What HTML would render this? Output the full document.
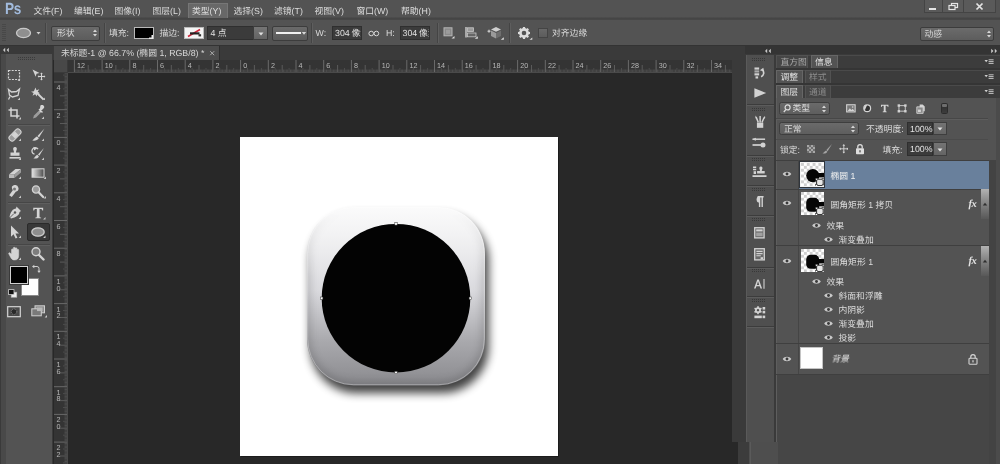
<!DOCTYPE html>
<html lang="zh"><head><meta charset="utf-8"><title>Photoshop</title>
<style>
html,body{margin:0;padding:0;background:#282828;}
body{width:1000px;height:464px;overflow:hidden;font-family:"Liberation Sans","Noto Sans CJK SC",sans-serif;font-size:8.8px;color:#d6d6d6;text-rendering:geometricPrecision;}
#app{position:relative;width:1000px;height:464px;overflow:hidden;background:#282828;}
#app .t,#app svg.i{filter:blur(0.3px);}
#app div,#app svg.i{position:absolute;box-sizing:border-box;}
.t{white-space:nowrap;line-height:11px;height:11px;opacity:.999;}

</style></head>
<body>
<div id="app">
<div style="left:0px;top:0px;width:1000px;height:18px;background:#535353;"></div>
<div style="left:0px;top:17px;width:1000px;height:3px;background:linear-gradient(#4f4f4f,#444 55%,#494949);"></div>
<div class="t" style="left:5.4px;top:0.8px;font-size:16.2px;font-weight:bold;color:#a2bbdd;line-height:17px;height:17px;letter-spacing:-0.3px;transform:scaleX(0.84);transform-origin:0 0">Ps</div>
<div style="left:188px;top:3px;width:40px;height:15px;background:#686868;border:1px solid #767676;border-bottom:none;"></div>
<div class="t" style="left:33.5px;top:6.2px;color:#dedede;">文件(F)</div>
<div class="t" style="left:74px;top:6.2px;color:#dedede;">编辑(E)</div>
<div class="t" style="left:114.5px;top:6.2px;color:#dedede;">图像(I)</div>
<div class="t" style="left:152.5px;top:6.2px;color:#dedede;">图层(L)</div>
<div class="t" style="left:192px;top:6.2px;color:#dedede;">类型(Y)</div>
<div class="t" style="left:233.5px;top:6.2px;color:#dedede;">选择(S)</div>
<div class="t" style="left:274px;top:6.2px;color:#dedede;">滤镜(T)</div>
<div class="t" style="left:314.5px;top:6.2px;color:#dedede;">视图(V)</div>
<div class="t" style="left:356.5px;top:6.2px;color:#dedede;">窗口(W)</div>
<div class="t" style="left:401px;top:6.2px;color:#dedede;">帮助(H)</div>
<div style="left:924px;top:0px;width:19px;height:13px;background:#5a5a5a;border:1px solid #444;border-top:none;"></div>
<div style="left:943px;top:0px;width:21px;height:13px;background:#5a5a5a;border:1px solid #444;border-top:none;border-left:none;"></div>
<div style="left:964px;top:0px;width:32px;height:13px;background:#5a5a5a;border:1px solid #444;border-top:none;border-left:none;"></div>
<svg class="i" style="left:924px;top:0px;" width="72" height="13" viewBox="0 0 72 13"><rect x="5" y="8" width="7" height="2" fill="#e4e4e4"/><rect x="27.5" y="3.5" width="6" height="4" fill="none" stroke="#e4e4e4" stroke-width="1.2"/><rect x="25" y="5.5" width="6" height="4" fill="#5a5a5a" stroke="#e4e4e4" stroke-width="1.2"/><path d="M52.5 3.5l6 6M58.5 3.5l-6 6" stroke="#e4e4e4" stroke-width="1.7" fill="none"/></svg>
<div style="left:0px;top:20px;width:1000px;height:25px;background:#535353;"></div>
<div style="left:0px;top:45px;width:1000px;height:1px;background:#333;"></div>
<div style="left:0px;top:46px;width:1000px;height:14px;background:#3a3a3a;"></div>
<div style="left:0px;top:46px;width:53px;height:418px;background:#3a3a3a;"></div>
<div style="left:0px;top:46px;width:53px;height:8.5px;background:#393939;"></div>
<div style="left:1px;top:54px;width:51px;height:410px;background:#535353;border-left:5px solid #494949;"></div>
<svg class="i" style="left:2px;top:47px;" width="8" height="6" viewBox="0 0 8 6"><path d="M3.2 0.8L1 3l2.2 2.2zM6.8 0.8L4.6 3l2.2 2.2z" fill="#c8c8c8"/></svg>
<div style="left:54px;top:46px;width:165.5px;height:14px;background:#4c4c4c;border-right:1px solid #2e2e2e;"></div>
<div class="t" style="left:61px;top:48.3px;color:#d8d8d8;">未标题-1 @ 66.7% (椭圆 1, RGB/8) *</div>
<svg class="i" style="left:208.6px;top:50.3px;" width="7" height="7" viewBox="0 0 7 7"><path d="M1.2 1.2l4 4M5.2 1.2l-4 4" stroke="#b4b4b4" stroke-width="0.9"/></svg>
<div style="left:54px;top:60px;width:678px;height:13px;background:#343434;border-bottom:1px solid #4a4a4a;"></div>
<div style="left:54px;top:60px;width:14px;height:404px;background:#343434;border-right:1px solid #4a4a4a;"></div>
<div style="left:54px;top:60px;width:14px;height:13px;background:#484848;border-right:1px solid #3a3a3a;border-bottom:1px solid #3a3a3a;"></div>
<svg class="i" style="left:68px;top:60px;" width="664" height="12" viewBox="0 0 664 12"><path d="M6.4 0v12M34.1 0v12M61.8 0v12M89.5 0v12M117.2 0v12M144.9 0v12M172.6 0v12M200.3 0v12M228.0 0v12M255.7 0v12M283.4 0v12M311.1 0v12M338.8 0v12M366.5 0v12M394.2 0v12M421.9 0v12M449.6 0v12M477.3 0v12M505.0 0v12M532.7 0v12M560.4 0v12M588.1 0v12M615.8 0v12M643.5 0v12" stroke="#777" stroke-width="0.8" fill="none"/><path d="M20.2 5v7M47.9 5v7M75.7 5v7M103.3 5v7M131.0 5v7M158.8 5v7M186.4 5v7M214.2 5v7M241.9 5v7M269.6 5v7M297.2 5v7M325.0 5v7M352.6 5v7M380.4 5v7M408.1 5v7M435.8 5v7M463.5 5v7M491.1 5v7M518.9 5v7M546.5 5v7M574.2 5v7M602.0 5v7M629.6 5v7M657.4 5v7" stroke="#6c6c6c" stroke-width="0.7" fill="none"/><path d="M7.8 9.5v2.5M9.2 9.5v2.5M10.6 9.5v2.5M11.9 9.5v2.5M13.3 8v4M14.7 9.5v2.5M16.1 9.5v2.5M17.5 9.5v2.5M18.9 9.5v2.5M21.6 9.5v2.5M23.0 9.5v2.5M24.4 9.5v2.5M25.8 9.5v2.5M27.2 8v4M28.6 9.5v2.5M29.9 9.5v2.5M31.3 9.5v2.5M32.7 9.5v2.5M35.5 9.5v2.5M36.9 9.5v2.5M38.3 9.5v2.5M39.6 9.5v2.5M41.0 8v4M42.4 9.5v2.5M43.8 9.5v2.5M45.2 9.5v2.5M46.6 9.5v2.5M49.3 9.5v2.5M50.7 9.5v2.5M52.1 9.5v2.5M53.5 9.5v2.5M54.9 8v4M56.3 9.5v2.5M57.6 9.5v2.5M59.0 9.5v2.5M60.4 9.5v2.5M63.2 9.5v2.5M64.6 9.5v2.5M66.0 9.5v2.5M67.3 9.5v2.5M68.7 8v4M70.1 9.5v2.5M71.5 9.5v2.5M72.9 9.5v2.5M74.3 9.5v2.5M77.0 9.5v2.5M78.4 9.5v2.5M79.8 9.5v2.5M81.2 9.5v2.5M82.6 8v4M84.0 9.5v2.5M85.3 9.5v2.5M86.7 9.5v2.5M88.1 9.5v2.5M90.9 9.5v2.5M92.3 9.5v2.5M93.7 9.5v2.5M95.0 9.5v2.5M96.4 8v4M97.8 9.5v2.5M99.2 9.5v2.5M100.6 9.5v2.5M102.0 9.5v2.5M104.7 9.5v2.5M106.1 9.5v2.5M107.5 9.5v2.5M108.9 9.5v2.5M110.3 8v4M111.7 9.5v2.5M113.0 9.5v2.5M114.4 9.5v2.5M115.8 9.5v2.5M118.6 9.5v2.5M120.0 9.5v2.5M121.4 9.5v2.5M122.7 9.5v2.5M124.1 8v4M125.5 9.5v2.5M126.9 9.5v2.5M128.3 9.5v2.5M129.7 9.5v2.5M132.4 9.5v2.5M133.8 9.5v2.5M135.2 9.5v2.5M136.6 9.5v2.5M138.0 8v4M139.4 9.5v2.5M140.7 9.5v2.5M142.1 9.5v2.5M143.5 9.5v2.5M146.3 9.5v2.5M147.7 9.5v2.5M149.1 9.5v2.5M150.4 9.5v2.5M151.8 8v4M153.2 9.5v2.5M154.6 9.5v2.5M156.0 9.5v2.5M157.4 9.5v2.5M160.1 9.5v2.5M161.5 9.5v2.5M162.9 9.5v2.5M164.3 9.5v2.5M165.7 8v4M167.1 9.5v2.5M168.4 9.5v2.5M169.8 9.5v2.5M171.2 9.5v2.5M174.0 9.5v2.5M175.4 9.5v2.5M176.8 9.5v2.5M178.1 9.5v2.5M179.5 8v4M180.9 9.5v2.5M182.3 9.5v2.5M183.7 9.5v2.5M185.1 9.5v2.5M187.8 9.5v2.5M189.2 9.5v2.5M190.6 9.5v2.5M192.0 9.5v2.5M193.4 8v4M194.8 9.5v2.5M196.1 9.5v2.5M197.5 9.5v2.5M198.9 9.5v2.5M201.7 9.5v2.5M203.1 9.5v2.5M204.5 9.5v2.5M205.8 9.5v2.5M207.2 8v4M208.6 9.5v2.5M210.0 9.5v2.5M211.4 9.5v2.5M212.8 9.5v2.5M215.5 9.5v2.5M216.9 9.5v2.5M218.3 9.5v2.5M219.7 9.5v2.5M221.1 8v4M222.5 9.5v2.5M223.8 9.5v2.5M225.2 9.5v2.5M226.6 9.5v2.5M229.4 9.5v2.5M230.8 9.5v2.5M232.2 9.5v2.5M233.5 9.5v2.5M234.9 8v4M236.3 9.5v2.5M237.7 9.5v2.5M239.1 9.5v2.5M240.5 9.5v2.5M243.2 9.5v2.5M244.6 9.5v2.5M246.0 9.5v2.5M247.4 9.5v2.5M248.8 8v4M250.2 9.5v2.5M251.5 9.5v2.5M252.9 9.5v2.5M254.3 9.5v2.5M257.1 9.5v2.5M258.5 9.5v2.5M259.9 9.5v2.5M261.2 9.5v2.5M262.6 8v4M264.0 9.5v2.5M265.4 9.5v2.5M266.8 9.5v2.5M268.2 9.5v2.5M270.9 9.5v2.5M272.3 9.5v2.5M273.7 9.5v2.5M275.1 9.5v2.5M276.5 8v4M277.9 9.5v2.5M279.2 9.5v2.5M280.6 9.5v2.5M282.0 9.5v2.5M284.8 9.5v2.5M286.2 9.5v2.5M287.6 9.5v2.5M288.9 9.5v2.5M290.3 8v4M291.7 9.5v2.5M293.1 9.5v2.5M294.5 9.5v2.5M295.9 9.5v2.5M298.6 9.5v2.5M300.0 9.5v2.5M301.4 9.5v2.5M302.8 9.5v2.5M304.2 8v4M305.6 9.5v2.5M306.9 9.5v2.5M308.3 9.5v2.5M309.7 9.5v2.5M312.5 9.5v2.5M313.9 9.5v2.5M315.3 9.5v2.5M316.6 9.5v2.5M318.0 8v4M319.4 9.5v2.5M320.8 9.5v2.5M322.2 9.5v2.5M323.6 9.5v2.5M326.3 9.5v2.5M327.7 9.5v2.5M329.1 9.5v2.5M330.5 9.5v2.5M331.9 8v4M333.3 9.5v2.5M334.6 9.5v2.5M336.0 9.5v2.5M337.4 9.5v2.5M340.2 9.5v2.5M341.6 9.5v2.5M343.0 9.5v2.5M344.3 9.5v2.5M345.7 8v4M347.1 9.5v2.5M348.5 9.5v2.5M349.9 9.5v2.5M351.3 9.5v2.5M354.0 9.5v2.5M355.4 9.5v2.5M356.8 9.5v2.5M358.2 9.5v2.5M359.6 8v4M361.0 9.5v2.5M362.3 9.5v2.5M363.7 9.5v2.5M365.1 9.5v2.5M367.9 9.5v2.5M369.3 9.5v2.5M370.7 9.5v2.5M372.0 9.5v2.5M373.4 8v4M374.8 9.5v2.5M376.2 9.5v2.5M377.6 9.5v2.5M379.0 9.5v2.5M381.7 9.5v2.5M383.1 9.5v2.5M384.5 9.5v2.5M385.9 9.5v2.5M387.3 8v4M388.7 9.5v2.5M390.0 9.5v2.5M391.4 9.5v2.5M392.8 9.5v2.5M395.6 9.5v2.5M397.0 9.5v2.5M398.4 9.5v2.5M399.7 9.5v2.5M401.1 8v4M402.5 9.5v2.5M403.9 9.5v2.5M405.3 9.5v2.5M406.7 9.5v2.5M409.4 9.5v2.5M410.8 9.5v2.5M412.2 9.5v2.5M413.6 9.5v2.5M415.0 8v4M416.4 9.5v2.5M417.7 9.5v2.5M419.1 9.5v2.5M420.5 9.5v2.5M423.3 9.5v2.5M424.7 9.5v2.5M426.1 9.5v2.5M427.4 9.5v2.5M428.8 8v4M430.2 9.5v2.5M431.6 9.5v2.5M433.0 9.5v2.5M434.4 9.5v2.5M437.1 9.5v2.5M438.5 9.5v2.5M439.9 9.5v2.5M441.3 9.5v2.5M442.7 8v4M444.1 9.5v2.5M445.4 9.5v2.5M446.8 9.5v2.5M448.2 9.5v2.5M451.0 9.5v2.5M452.4 9.5v2.5M453.8 9.5v2.5M455.1 9.5v2.5M456.5 8v4M457.9 9.5v2.5M459.3 9.5v2.5M460.7 9.5v2.5M462.1 9.5v2.5M464.8 9.5v2.5M466.2 9.5v2.5M467.6 9.5v2.5M469.0 9.5v2.5M470.4 8v4M471.8 9.5v2.5M473.1 9.5v2.5M474.5 9.5v2.5M475.9 9.5v2.5M478.7 9.5v2.5M480.1 9.5v2.5M481.5 9.5v2.5M482.8 9.5v2.5M484.2 8v4M485.6 9.5v2.5M487.0 9.5v2.5M488.4 9.5v2.5M489.8 9.5v2.5M492.5 9.5v2.5M493.9 9.5v2.5M495.3 9.5v2.5M496.7 9.5v2.5M498.1 8v4M499.5 9.5v2.5M500.8 9.5v2.5M502.2 9.5v2.5M503.6 9.5v2.5M506.4 9.5v2.5M507.8 9.5v2.5M509.2 9.5v2.5M510.5 9.5v2.5M511.9 8v4M513.3 9.5v2.5M514.7 9.5v2.5M516.1 9.5v2.5M517.5 9.5v2.5M520.2 9.5v2.5M521.6 9.5v2.5M523.0 9.5v2.5M524.4 9.5v2.5M525.8 8v4M527.2 9.5v2.5M528.5 9.5v2.5M529.9 9.5v2.5M531.3 9.5v2.5M534.1 9.5v2.5M535.5 9.5v2.5M536.9 9.5v2.5M538.2 9.5v2.5M539.6 8v4M541.0 9.5v2.5M542.4 9.5v2.5M543.8 9.5v2.5M545.2 9.5v2.5M547.9 9.5v2.5M549.3 9.5v2.5M550.7 9.5v2.5M552.1 9.5v2.5M553.5 8v4M554.9 9.5v2.5M556.2 9.5v2.5M557.6 9.5v2.5M559.0 9.5v2.5M561.8 9.5v2.5M563.2 9.5v2.5M564.6 9.5v2.5M565.9 9.5v2.5M567.3 8v4M568.7 9.5v2.5M570.1 9.5v2.5M571.5 9.5v2.5M572.9 9.5v2.5M575.6 9.5v2.5M577.0 9.5v2.5M578.4 9.5v2.5M579.8 9.5v2.5M581.2 8v4M582.6 9.5v2.5M583.9 9.5v2.5M585.3 9.5v2.5M586.7 9.5v2.5M589.5 9.5v2.5M590.9 9.5v2.5M592.3 9.5v2.5M593.6 9.5v2.5M595.0 8v4M596.4 9.5v2.5M597.8 9.5v2.5M599.2 9.5v2.5M600.6 9.5v2.5M603.3 9.5v2.5M604.7 9.5v2.5M606.1 9.5v2.5M607.5 9.5v2.5M608.9 8v4M610.3 9.5v2.5M611.6 9.5v2.5M613.0 9.5v2.5M614.4 9.5v2.5M617.2 9.5v2.5M618.6 9.5v2.5M620.0 9.5v2.5M621.3 9.5v2.5M622.7 8v4M624.1 9.5v2.5M625.5 9.5v2.5M626.9 9.5v2.5M628.3 9.5v2.5M631.0 9.5v2.5M632.4 9.5v2.5M633.8 9.5v2.5M635.2 9.5v2.5M636.6 8v4M638.0 9.5v2.5M639.3 9.5v2.5M640.7 9.5v2.5M642.1 9.5v2.5M644.9 9.5v2.5M646.3 9.5v2.5M647.7 9.5v2.5M649.0 9.5v2.5M650.4 8v4M651.8 9.5v2.5M653.2 9.5v2.5M654.6 9.5v2.5M656.0 9.5v2.5M658.7 9.5v2.5M660.1 9.5v2.5M661.5 9.5v2.5M662.9 9.5v2.5" stroke="#5c5c5c" stroke-width="0.6" fill="none"/></svg>
<div class="t" style="left:77px;top:59.7px;color:#b6b6b6;font-size:7.2px;">12</div>
<div class="t" style="left:104.7px;top:59.7px;color:#b6b6b6;font-size:7.2px;">10</div>
<div class="t" style="left:132.4px;top:59.7px;color:#b6b6b6;font-size:7.2px;">8</div>
<div class="t" style="left:160.1px;top:59.7px;color:#b6b6b6;font-size:7.2px;">6</div>
<div class="t" style="left:187.8px;top:59.7px;color:#b6b6b6;font-size:7.2px;">4</div>
<div class="t" style="left:215.5px;top:59.7px;color:#b6b6b6;font-size:7.2px;">2</div>
<div class="t" style="left:243.2px;top:59.7px;color:#b6b6b6;font-size:7.2px;">0</div>
<div class="t" style="left:270.9px;top:59.7px;color:#b6b6b6;font-size:7.2px;">2</div>
<div class="t" style="left:298.6px;top:59.7px;color:#b6b6b6;font-size:7.2px;">4</div>
<div class="t" style="left:326.3px;top:59.7px;color:#b6b6b6;font-size:7.2px;">6</div>
<div class="t" style="left:354px;top:59.7px;color:#b6b6b6;font-size:7.2px;">8</div>
<div class="t" style="left:381.7px;top:59.7px;color:#b6b6b6;font-size:7.2px;">10</div>
<div class="t" style="left:409.4px;top:59.7px;color:#b6b6b6;font-size:7.2px;">12</div>
<div class="t" style="left:437.1px;top:59.7px;color:#b6b6b6;font-size:7.2px;">14</div>
<div class="t" style="left:464.8px;top:59.7px;color:#b6b6b6;font-size:7.2px;">16</div>
<div class="t" style="left:492.5px;top:59.7px;color:#b6b6b6;font-size:7.2px;">18</div>
<div class="t" style="left:520.2px;top:59.7px;color:#b6b6b6;font-size:7.2px;">20</div>
<div class="t" style="left:547.9px;top:59.7px;color:#b6b6b6;font-size:7.2px;">22</div>
<div class="t" style="left:575.6px;top:59.7px;color:#b6b6b6;font-size:7.2px;">24</div>
<div class="t" style="left:603.3px;top:59.7px;color:#b6b6b6;font-size:7.2px;">26</div>
<div class="t" style="left:631px;top:59.7px;color:#b6b6b6;font-size:7.2px;">28</div>
<div class="t" style="left:658.7px;top:59.7px;color:#b6b6b6;font-size:7.2px;">30</div>
<div class="t" style="left:686.4px;top:59.7px;color:#b6b6b6;font-size:7.2px;">32</div>
<div class="t" style="left:714.1px;top:59.7px;color:#b6b6b6;font-size:7.2px;">34</div>
<svg class="i" style="left:54px;top:73px;" width="13" height="391" viewBox="0 0 13 391"><path d="M0 9.0h13M0 36.7h13M0 64.4h13M0 92.1h13M0 119.8h13M0 147.5h13M0 175.2h13M0 202.9h13M0 230.6h13M0 258.3h13M0 286.0h13M0 313.7h13M0 341.4h13M0 369.1h13M0 396.8h13" stroke="#777" stroke-width="0.8" fill="none"/><path d="M6 22.8h7M6 50.5h7M6 78.2h7M6 105.9h7M6 133.7h7M6 161.3h7M6 189.1h7M6 216.8h7M6 244.5h7M6 272.2h7M6 299.9h7M6 327.6h7M6 355.2h7M6 383.0h7M6 410.6h7" stroke="#6c6c6c" stroke-width="0.7" fill="none"/><path d="M10.5 0.7h2.5M9 2.1h4M10.5 3.5h2.5M10.5 4.8h2.5M10.5 6.2h2.5M10.5 7.6h2.5M10.5 10.4h2.5M10.5 11.8h2.5M10.5 13.2h2.5M10.5 14.5h2.5M9 15.9h4M10.5 17.3h2.5M10.5 18.7h2.5M10.5 20.1h2.5M10.5 21.5h2.5M10.5 24.2h2.5M10.5 25.6h2.5M10.5 27.0h2.5M10.5 28.4h2.5M9 29.8h4M10.5 31.2h2.5M10.5 32.5h2.5M10.5 33.9h2.5M10.5 35.3h2.5M10.5 38.1h2.5M10.5 39.5h2.5M10.5 40.9h2.5M10.5 42.2h2.5M9 43.6h4M10.5 45.0h2.5M10.5 46.4h2.5M10.5 47.8h2.5M10.5 49.2h2.5M10.5 51.9h2.5M10.5 53.3h2.5M10.5 54.7h2.5M10.5 56.1h2.5M9 57.5h4M10.5 58.9h2.5M10.5 60.2h2.5M10.5 61.6h2.5M10.5 63.0h2.5M10.5 65.8h2.5M10.5 67.2h2.5M10.5 68.6h2.5M10.5 69.9h2.5M9 71.3h4M10.5 72.7h2.5M10.5 74.1h2.5M10.5 75.5h2.5M10.5 76.9h2.5M10.5 79.6h2.5M10.5 81.0h2.5M10.5 82.4h2.5M10.5 83.8h2.5M9 85.2h4M10.5 86.6h2.5M10.5 87.9h2.5M10.5 89.3h2.5M10.5 90.7h2.5M10.5 93.5h2.5M10.5 94.9h2.5M10.5 96.3h2.5M10.5 97.6h2.5M9 99.0h4M10.5 100.4h2.5M10.5 101.8h2.5M10.5 103.2h2.5M10.5 104.6h2.5M10.5 107.3h2.5M10.5 108.7h2.5M10.5 110.1h2.5M10.5 111.5h2.5M9 112.9h4M10.5 114.3h2.5M10.5 115.6h2.5M10.5 117.0h2.5M10.5 118.4h2.5M10.5 121.2h2.5M10.5 122.6h2.5M10.5 124.0h2.5M10.5 125.3h2.5M9 126.7h4M10.5 128.1h2.5M10.5 129.5h2.5M10.5 130.9h2.5M10.5 132.3h2.5M10.5 135.0h2.5M10.5 136.4h2.5M10.5 137.8h2.5M10.5 139.2h2.5M9 140.6h4M10.5 142.0h2.5M10.5 143.3h2.5M10.5 144.7h2.5M10.5 146.1h2.5M10.5 148.9h2.5M10.5 150.3h2.5M10.5 151.7h2.5M10.5 153.0h2.5M9 154.4h4M10.5 155.8h2.5M10.5 157.2h2.5M10.5 158.6h2.5M10.5 160.0h2.5M10.5 162.7h2.5M10.5 164.1h2.5M10.5 165.5h2.5M10.5 166.9h2.5M9 168.3h4M10.5 169.7h2.5M10.5 171.0h2.5M10.5 172.4h2.5M10.5 173.8h2.5M10.5 176.6h2.5M10.5 178.0h2.5M10.5 179.4h2.5M10.5 180.7h2.5M9 182.1h4M10.5 183.5h2.5M10.5 184.9h2.5M10.5 186.3h2.5M10.5 187.7h2.5M10.5 190.4h2.5M10.5 191.8h2.5M10.5 193.2h2.5M10.5 194.6h2.5M9 196.0h4M10.5 197.4h2.5M10.5 198.7h2.5M10.5 200.1h2.5M10.5 201.5h2.5M10.5 204.3h2.5M10.5 205.7h2.5M10.5 207.1h2.5M10.5 208.4h2.5M9 209.8h4M10.5 211.2h2.5M10.5 212.6h2.5M10.5 214.0h2.5M10.5 215.4h2.5M10.5 218.1h2.5M10.5 219.5h2.5M10.5 220.9h2.5M10.5 222.3h2.5M9 223.7h4M10.5 225.1h2.5M10.5 226.4h2.5M10.5 227.8h2.5M10.5 229.2h2.5M10.5 232.0h2.5M10.5 233.4h2.5M10.5 234.8h2.5M10.5 236.1h2.5M9 237.5h4M10.5 238.9h2.5M10.5 240.3h2.5M10.5 241.7h2.5M10.5 243.1h2.5M10.5 245.8h2.5M10.5 247.2h2.5M10.5 248.6h2.5M10.5 250.0h2.5M9 251.4h4M10.5 252.8h2.5M10.5 254.1h2.5M10.5 255.5h2.5M10.5 256.9h2.5M10.5 259.7h2.5M10.5 261.1h2.5M10.5 262.5h2.5M10.5 263.8h2.5M9 265.2h4M10.5 266.6h2.5M10.5 268.0h2.5M10.5 269.4h2.5M10.5 270.8h2.5M10.5 273.5h2.5M10.5 274.9h2.5M10.5 276.3h2.5M10.5 277.7h2.5M9 279.1h4M10.5 280.5h2.5M10.5 281.8h2.5M10.5 283.2h2.5M10.5 284.6h2.5M10.5 287.4h2.5M10.5 288.8h2.5M10.5 290.2h2.5M10.5 291.5h2.5M9 292.9h4M10.5 294.3h2.5M10.5 295.7h2.5M10.5 297.1h2.5M10.5 298.5h2.5M10.5 301.2h2.5M10.5 302.6h2.5M10.5 304.0h2.5M10.5 305.4h2.5M9 306.8h4M10.5 308.2h2.5M10.5 309.5h2.5M10.5 310.9h2.5M10.5 312.3h2.5M10.5 315.1h2.5M10.5 316.5h2.5M10.5 317.9h2.5M10.5 319.2h2.5M9 320.6h4M10.5 322.0h2.5M10.5 323.4h2.5M10.5 324.8h2.5M10.5 326.2h2.5M10.5 328.9h2.5M10.5 330.3h2.5M10.5 331.7h2.5M10.5 333.1h2.5M9 334.5h4M10.5 335.9h2.5M10.5 337.2h2.5M10.5 338.6h2.5M10.5 340.0h2.5M10.5 342.8h2.5M10.5 344.2h2.5M10.5 345.6h2.5M10.5 346.9h2.5M9 348.3h4M10.5 349.7h2.5M10.5 351.1h2.5M10.5 352.5h2.5M10.5 353.9h2.5M10.5 356.6h2.5M10.5 358.0h2.5M10.5 359.4h2.5M10.5 360.8h2.5M9 362.2h4M10.5 363.6h2.5M10.5 364.9h2.5M10.5 366.3h2.5M10.5 367.7h2.5M10.5 370.5h2.5M10.5 371.9h2.5M10.5 373.3h2.5M10.5 374.6h2.5M9 376.0h4M10.5 377.4h2.5M10.5 378.8h2.5M10.5 380.2h2.5M10.5 381.6h2.5M10.5 384.3h2.5M10.5 385.7h2.5M10.5 387.1h2.5M10.5 388.5h2.5M9 389.9h4M10.5 391.3h2.5M10.5 392.6h2.5M10.5 394.0h2.5M10.5 395.4h2.5M10.5 398.2h2.5M10.5 399.6h2.5M10.5 401.0h2.5M10.5 402.3h2.5M9 403.7h4M10.5 405.1h2.5M10.5 406.5h2.5M10.5 407.9h2.5M10.5 409.3h2.5M10.5 412.0h2.5M10.5 413.4h2.5M10.5 414.8h2.5M10.5 416.2h2.5M9 417.6h4M10.5 419.0h2.5M10.5 420.3h2.5M10.5 421.7h2.5M10.5 423.1h2.5" stroke="#5c5c5c" stroke-width="0.6" fill="none"/></svg>
<div class="t" style="left:56.5px;top:84px;color:#b6b6b6;font-size:7.2px;line-height:8px;height:8px;">4</div>
<div class="t" style="left:56.5px;top:111.7px;color:#b6b6b6;font-size:7.2px;line-height:8px;height:8px;">2</div>
<div class="t" style="left:56.5px;top:139.4px;color:#b6b6b6;font-size:7.2px;line-height:8px;height:8px;">0</div>
<div class="t" style="left:56.5px;top:167.1px;color:#b6b6b6;font-size:7.2px;line-height:8px;height:8px;">2</div>
<div class="t" style="left:56.5px;top:194.8px;color:#b6b6b6;font-size:7.2px;line-height:8px;height:8px;">4</div>
<div class="t" style="left:56.5px;top:222.5px;color:#b6b6b6;font-size:7.2px;line-height:8px;height:8px;">6</div>
<div class="t" style="left:56.5px;top:250.2px;color:#b6b6b6;font-size:7.2px;line-height:8px;height:8px;">8</div>
<div class="t" style="left:56.5px;top:277.9px;color:#b6b6b6;font-size:7.2px;line-height:8px;height:8px;">1</div>
<div class="t" style="left:56.5px;top:284.5px;color:#b6b6b6;font-size:7.2px;line-height:8px;height:8px;">0</div>
<div class="t" style="left:56.5px;top:305.6px;color:#b6b6b6;font-size:7.2px;line-height:8px;height:8px;">1</div>
<div class="t" style="left:56.5px;top:312.2px;color:#b6b6b6;font-size:7.2px;line-height:8px;height:8px;">2</div>
<div class="t" style="left:56.5px;top:333.3px;color:#b6b6b6;font-size:7.2px;line-height:8px;height:8px;">1</div>
<div class="t" style="left:56.5px;top:339.9px;color:#b6b6b6;font-size:7.2px;line-height:8px;height:8px;">4</div>
<div class="t" style="left:56.5px;top:361px;color:#b6b6b6;font-size:7.2px;line-height:8px;height:8px;">1</div>
<div class="t" style="left:56.5px;top:367.6px;color:#b6b6b6;font-size:7.2px;line-height:8px;height:8px;">6</div>
<div class="t" style="left:56.5px;top:388.7px;color:#b6b6b6;font-size:7.2px;line-height:8px;height:8px;">1</div>
<div class="t" style="left:56.5px;top:395.3px;color:#b6b6b6;font-size:7.2px;line-height:8px;height:8px;">8</div>
<div class="t" style="left:56.5px;top:416.4px;color:#b6b6b6;font-size:7.2px;line-height:8px;height:8px;">2</div>
<div class="t" style="left:56.5px;top:423px;color:#b6b6b6;font-size:7.2px;line-height:8px;height:8px;">0</div>
<div class="t" style="left:56.5px;top:444.1px;color:#b6b6b6;font-size:7.2px;line-height:8px;height:8px;">2</div>
<div class="t" style="left:56.5px;top:450.7px;color:#b6b6b6;font-size:7.2px;line-height:8px;height:8px;">2</div>
<div class="t" style="left:56.5px;top:471.8px;color:#b6b6b6;font-size:7.2px;line-height:8px;height:8px;">2</div>
<div class="t" style="left:56.5px;top:478.4px;color:#b6b6b6;font-size:7.2px;line-height:8px;height:8px;">4</div>
<div style="left:732px;top:60px;width:13px;height:404px;background:#3a3a3a;"></div>
<div style="left:240px;top:137px;width:318px;height:318.5px;background:#fff;box-shadow:1px 1px 0 #1c1c1c;"></div>
<svg class="i" style="left:240px;top:137px;" width="318" height="318" viewBox="0 0 318 318"><defs><linearGradient id="rg" x1="0" y1="0" x2="0" y2="1"><stop offset="0" stop-color="#fbfbfb"/><stop offset="0.14" stop-color="#f3f3f4"/><stop offset="0.26" stop-color="#ebebed"/><stop offset="0.47" stop-color="#dadade"/><stop offset="0.75" stop-color="#a9a9ad"/><stop offset="1" stop-color="#8a8a8e"/></linearGradient><filter id="ds" x="-30%" y="-30%" width="170%" height="170%"><feGaussianBlur stdDeviation="5"/></filter><filter id="is" x="-10%" y="-10%" width="120%" height="120%"><feGaussianBlur stdDeviation="3.5"/></filter><clipPath id="rc"><rect x="67" y="70" width="178" height="178.4" rx="46.5"/></clipPath><linearGradient id="mg" x1="0" y1="0" x2="0" y2="1"><stop offset="0.08" stop-color="#000"/><stop offset="0.4" stop-color="#fff"/></linearGradient><mask id="mk"><rect x="60" y="60" width="200" height="200" fill="url(#mg)"/></mask></defs><rect x="70.5" y="78" width="178" height="178" rx="46" fill="#000" opacity="0.75" filter="url(#ds)"/><rect x="67" y="70" width="178" height="178.4" rx="46.5" fill="url(#rg)"/><g clip-path="url(#rc)"><g mask="url(#mk)"><rect x="67" y="70" width="178" height="178.4" rx="46.5" fill="none" stroke="#000" stroke-opacity="0.13" stroke-width="9" filter="url(#is)"/></g><rect x="67.7" y="70.7" width="176.6" height="177" rx="45.8" fill="none" stroke="#fff" stroke-opacity="0.3" stroke-width="1"/></g><circle cx="156" cy="161.2" r="74.3" fill="#030303"/><g fill="#fff" stroke="#333" stroke-width="0.5"><rect x="154.8" y="85.7" width="2.4" height="2.4"/><rect x="154.8" y="234.3" width="2.4" height="2.4"/><rect x="80.5" y="160" width="2.4" height="2.4"/><rect x="229.1" y="160" width="2.4" height="2.4"/></g></svg>
<svg class="i" style="left:2px;top:23px;" width="4" height="20" viewBox="0 0 4 20"><path d="M1 1v18M3 1v18" stroke="#3e3e3e" stroke-width="1" stroke-dasharray="1 1"/></svg>
<svg class="i" style="left:14px;top:26px;" width="30" height="14" viewBox="0 0 30 14"><ellipse cx="9.5" cy="7" rx="7" ry="4.6" fill="#8f8f8f" stroke="#c9c9c9" stroke-width="1.3"/><path d="M22.5 6h4l-2 2.4z" fill="#d0d0d0"/></svg>
<div style="left:45px;top:23px;width:1px;height:20px;background:#444;box-shadow:1px 0 0 #5e5e5e;"></div>
<div style="left:51px;top:26px;width:49px;height:14.5px;background:linear-gradient(#6a6a6a,#5c5c5c);border:1px solid #3c3c3c;border-radius:2px;"></div>
<div class="t" style="left:57px;top:28px;color:#dadada;">形状</div>
<svg class="i" style="left:91px;top:27px;" width="8" height="12" viewBox="0 0 8 12"><path d="M2 5l2 -2.4l2 2.4zM2 7l2 2.4l2 -2.4z" fill="#d8d8d8"/></svg>
<div style="left:104px;top:23px;width:1px;height:20px;background:#444;box-shadow:1px 0 0 #5e5e5e;"></div>
<div class="t" style="left:109px;top:28px;color:#dadada;">填充:</div>
<div style="left:134px;top:27px;width:19.5px;height:12px;background:#000;border:1px solid #b8b8b8;"></div>
<svg class="i" style="left:149px;top:34.5px;" width="4" height="4" viewBox="0 0 4 4"><path d="M0 4h4v-4h-1.5v2.5h-2.5z" fill="#e8e8e8"/></svg>
<div class="t" style="left:159.5px;top:28px;color:#dadada;">描边:</div>
<div style="left:183.5px;top:27px;width:20px;height:12px;background:#f4f4f4;border:1px solid #bbb;"></div>
<svg class="i" style="left:184.5px;top:28px;" width="18" height="10" viewBox="0 0 18 10"><path d="M3 8.5L15 1.5" stroke="#d0243a" stroke-width="1.5"/><rect x="5" y="4.3" width="9.5" height="2.2" fill="#222"/><rect x="13.5" y="6.2" width="2.6" height="2.2" fill="#333"/></svg>
<div style="left:207px;top:25.5px;width:46px;height:14.5px;background:#3b3b3b;border:1px solid #2f2f2f;border-right:none;"></div>
<div class="t" style="left:210.5px;top:28px;color:#e2e2e2;">4 点</div>
<div style="left:253px;top:25.5px;width:14.5px;height:14.5px;background:linear-gradient(#757575,#646464);border:1px solid #3c3c3c;"></div>
<svg class="i" style="left:256.5px;top:30.5px;" width="8" height="6" viewBox="0 0 8 6"><path d="M1.5 1.5h5l-2.5 3z" fill="#e0e0e0"/></svg>
<div style="left:272px;top:26px;width:35.5px;height:14.5px;background:linear-gradient(#6a6a6a,#5a5a5a);border:1px solid #3c3c3c;border-radius:2px;"></div>
<div style="left:276px;top:32.3px;width:25px;height:1.8px;background:#f0f0f0;"></div>
<svg class="i" style="left:300.5px;top:31px;" width="6" height="5" viewBox="0 0 6 5"><path d="M0.8 1h4.4l-2.2 2.8z" fill="#d8d8d8"/></svg>
<div style="left:311px;top:23px;width:1px;height:20px;background:#444;box-shadow:1px 0 0 #5e5e5e;"></div>
<div class="t" style="left:315.5px;top:28px;color:#dadada;">W:</div>
<div style="left:332px;top:25.5px;width:29.5px;height:14.5px;background:#3b3b3b;border:1px solid #2f2f2f;overflow:hidden;"><div class="t" style="left:2px;top:1.5px;color:#e2e2e2">304<span style="margin-left:-0.6px"> </span>像素</div></div>
<svg class="i" style="left:367.5px;top:29.5px;" width="12" height="7" viewBox="0 0 12 7"><circle cx="3.2" cy="3.5" r="2.3" fill="none" stroke="#d8d8d8" stroke-width="1"/><circle cx="8.4" cy="3.5" r="2.3" fill="none" stroke="#d8d8d8" stroke-width="1"/></svg>
<div class="t" style="left:386px;top:28px;color:#dadada;">H:</div>
<div style="left:399.5px;top:25.5px;width:30px;height:14.5px;background:#3b3b3b;border:1px solid #2f2f2f;overflow:hidden;"><div class="t" style="left:2px;top:1.5px;color:#e2e2e2">304<span style="margin-left:-0.6px"> </span>像素</div></div>
<div style="left:436.5px;top:23px;width:1px;height:20px;background:#444;box-shadow:1px 0 0 #5e5e5e;"></div>
<svg class="i" style="left:443px;top:27px;" width="12" height="12" viewBox="0 0 12 12"><rect x="1" y="0.8" width="8" height="8" fill="#8a8a8a" stroke="#b5b5b5" stroke-width="1"/><rect x="3" y="2.8" width="4" height="4" fill="#9c9c9c"/><path d="M8.5 11.5h3v-2.5z" fill="#ddd"/></svg>
<svg class="i" style="left:465px;top:27px;" width="13" height="12" viewBox="0 0 13 12"><path d="M1 0v10.5" stroke="#d8d8d8" stroke-width="1.3"/><rect x="2.5" y="0.8" width="6" height="3.6" fill="#9a9a9a" stroke="#c8c8c8" stroke-width="0.8"/><rect x="2.5" y="6" width="8.5" height="3.8" fill="#666" stroke="#c8c8c8" stroke-width="0.8"/><path d="M9.8 11.8h3v-2.5z" fill="#ddd"/></svg>
<svg class="i" style="left:486.5px;top:26px;" width="17" height="14" viewBox="0 0 17 14"><path d="M9 1l5 2.4l-5 2.4l-5 -2.4z" fill="#cfcfcf"/><path d="M4 4.6l5 2.4v5.5l-5 -2.4z" fill="#9a9a9a"/><path d="M14 4.6l-5 2.4v5.5l5 -2.4z" fill="#6e6e6e"/><path d="M0.5 5.2h3M2 3.7v3" stroke="#ddd" stroke-width="1"/><path d="M13.8 13.8h3v-2.5z" fill="#ddd"/></svg>
<div style="left:509px;top:23px;width:1px;height:20px;background:#444;box-shadow:1px 0 0 #5e5e5e;"></div>
<svg class="i" style="left:518px;top:27px;" width="15" height="13" viewBox="0 0 15 13"><g transform="translate(6 6)"><circle r="3.6" fill="none" stroke="#dcdcdc" stroke-width="2.6"/><rect x="-1.1" y="-6" width="2.2" height="2.6" fill="#dcdcdc" transform="rotate(0)"/><rect x="-1.1" y="-6" width="2.2" height="2.6" fill="#dcdcdc" transform="rotate(45)"/><rect x="-1.1" y="-6" width="2.2" height="2.6" fill="#dcdcdc" transform="rotate(90)"/><rect x="-1.1" y="-6" width="2.2" height="2.6" fill="#dcdcdc" transform="rotate(135)"/><rect x="-1.1" y="-6" width="2.2" height="2.6" fill="#dcdcdc" transform="rotate(180)"/><rect x="-1.1" y="-6" width="2.2" height="2.6" fill="#dcdcdc" transform="rotate(225)"/><rect x="-1.1" y="-6" width="2.2" height="2.6" fill="#dcdcdc" transform="rotate(270)"/><rect x="-1.1" y="-6" width="2.2" height="2.6" fill="#dcdcdc" transform="rotate(315)"/></g><path d="M11.5 12.8h2.8v-2.3z" fill="#ddd"/></svg>
<div style="left:538px;top:28px;width:9.5px;height:9.5px;background:linear-gradient(#686868,#5c5c5c);border:1px solid #444;"></div>
<div class="t" style="left:552px;top:28px;color:#dadada;">对齐边缘</div>
<div style="left:920px;top:26.5px;width:74px;height:14.5px;background:linear-gradient(#6b6b6b,#5d5d5d);border:1px solid #3c3c3c;border-radius:2px;"></div>
<div class="t" style="left:924.5px;top:28.5px;color:#dadada;">动感</div>
<svg class="i" style="left:984.5px;top:27.5px;" width="8" height="12" viewBox="0 0 8 12"><path d="M2 5l2 -2.4l2 2.4zM2 7l2 2.4l2 -2.4z" fill="#d8d8d8"/></svg>
<svg class="i" style="left:18px;top:56.5px;" width="18" height="3" viewBox="0 0 18 3"><path d="M0 0.5h17M0 2.5h17" stroke="#3b3b3b" stroke-width="1" stroke-dasharray="1 1"/></svg>
<div style="left:26.5px;top:223px;width:23px;height:18px;background:#383838;border:1px solid #2a2a2a;border-radius:2px;"></div>
<div style="left:8px;top:124px;width:42px;height:1px;background:#464646;box-shadow:0 1px 0 #5e5e5e;"></div>
<div style="left:8px;top:202px;width:42px;height:1px;background:#464646;box-shadow:0 1px 0 #5e5e5e;"></div>
<div style="left:8px;top:243.5px;width:42px;height:1px;background:#464646;box-shadow:0 1px 0 #5e5e5e;"></div>
<svg class="i" style="left:5.6px;top:67px;" width="16" height="16" viewBox="0 0 16 16"><rect x="2.5" y="3.5" width="11" height="9" fill="none" stroke="#d4d4d4" stroke-width="1.2" stroke-dasharray="2 1.2"/><path d="M11.6 14h2.4v-2.4z" fill="#c8c8c8"/></svg>
<svg class="i" style="left:29.7px;top:67px;" width="16" height="16" viewBox="0 0 16 16"><path d="M2.5 2.5l7 3.4l-3 0.8l-0.8 3z" fill="#d4d4d4"/><path d="M11.5 6.5v6M8.5 9.5h6" stroke="#d4d4d4" stroke-width="1.1"/><path d="M11.5 5.6l1.3 1.5h-2.6zM11.5 13.4l1.3 -1.5h-2.6zM7.6 9.5l1.5 -1.3v2.6zM15.4 9.5l-1.5 -1.3v2.6z" fill="#d4d4d4"/></svg>
<svg class="i" style="left:5.6px;top:86px;" width="16" height="16" viewBox="0 0 16 16"><path d="M2.5 3.5l3 2.5l5 -0.5l3 -2.5l-1.5 6.5l-5.5 1.5l-3 -2z" fill="none" stroke="#d4d4d4" stroke-width="1.3"/><path d="M4 10.5l-1.5 3" stroke="#d4d4d4" stroke-width="1.2"/><path d="M11.6 14h2.4v-2.4z" fill="#c8c8c8"/></svg>
<svg class="i" style="left:29.7px;top:86px;" width="16" height="16" viewBox="0 0 16 16"><path d="M7 7l6.5 6.5" stroke="#d4d4d4" stroke-width="1.8"/><path d="M5.5 1.5l1 2.8l2.8 -1l-1.6 2.4l2.3 1.6l-2.9 0.3l-0.2 2.9l-1.8 -2.3l-2.5 1.5l1 -2.8l-2.6 -1.2l2.9 -0.5z" fill="#d4d4d4"/><path d="M12.6 14h2.4v-2.4z" fill="#c8c8c8"/></svg>
<svg class="i" style="left:5.6px;top:105px;" width="16" height="16" viewBox="0 0 16 16"><path d="M5 2.5v8.5h8.5M2.5 5h8.5v8.5" fill="none" stroke="#d4d4d4" stroke-width="1.5"/><path d="M12.6 14.5h2.4v-2.4z" fill="#c8c8c8"/></svg>
<svg class="i" style="left:29.7px;top:105px;" width="16" height="16" viewBox="0 0 16 16"><path d="M3 13.5l1 -3l5.5 -5.5l2 2l-5.5 5.5z" fill="#9c9c9c"/><path d="M9 4l3.5 3.5M10.5 5.5l2.5 -2.5a1.4 1.4 0 0 0 -2 -2z" stroke="#d4d4d4" stroke-width="1.4" fill="#d4d4d4"/><path d="M11.6 14h2.4v-2.4z" fill="#c8c8c8"/></svg>
<svg class="i" style="left:6.6px;top:126.5px;" width="16" height="16" viewBox="0 0 16 16"><g transform="rotate(-45 8 8)"><rect x="1" y="5" width="14" height="6" rx="2.5" fill="#9c9c9c" stroke="#d4d4d4" stroke-width="1"/><rect x="5.5" y="5.5" width="5" height="5" fill="#d4d4d4"/></g><path d="M11.6 14h2.4v-2.4z" fill="#c8c8c8"/></svg>
<svg class="i" style="left:30.3px;top:126.5px;" width="16" height="16" viewBox="0 0 16 16"><path d="M14.5 1.5l-7 7.5l1.5 1.5z" fill="#d4d4d4"/><path d="M7 9.5l1.8 1.8c-1 2.2 -4 2.6 -6.8 2.2c1.8 -0.6 2 -2.6 5 -4z" fill="#d4d4d4"/><path d="M11.6 14h2.4v-2.4z" fill="#c8c8c8"/></svg>
<svg class="i" style="left:6.6px;top:145.5px;" width="16" height="16" viewBox="0 0 16 16"><path d="M6.2 2.2a1.9 1.9 0 0 1 3.6 0c0.3 1.6 -0.8 2.5 -0.8 4.3h3.5v3.2h-9v-3.2h3.5c0 -1.8 -1.1 -2.7 -0.8 -4.3z" fill="#d4d4d4"/><rect x="2.5" y="11" width="11" height="1.6" fill="#d4d4d4"/><path d="M11.6 14h2.4v-2.4z" fill="#c8c8c8"/></svg>
<svg class="i" style="left:30.3px;top:145.5px;" width="16" height="16" viewBox="0 0 16 16"><path d="M14 2l-6 6.5l1.3 1.3z" fill="#d4d4d4"/><path d="M7.3 8.8l1.6 1.6c-0.8 2 -3.2 2.4 -5.5 2c1.5 -0.5 1.6 -2.3 3.9 -3.6z" fill="#d4d4d4"/><path d="M8 3.2a3.3 3.3 0 1 0 -3.5 5" fill="none" stroke="#d4d4d4" stroke-width="1.3"/><path d="M3.5 0.8l3.6 1.8l-3 2z" fill="#d4d4d4"/><path d="M11.6 14h2.4v-2.4z" fill="#c8c8c8"/></svg>
<svg class="i" style="left:6.6px;top:164.5px;" width="16" height="16" viewBox="0 0 16 16"><path d="M2 9.5l6.5 -5.5h5.5l-6.5 5.5z" fill="#d4d4d4"/><path d="M2 9.5h5.5v3.5h-5.5z" fill="#bbb"/><path d="M7.5 9.5l6.5 -5.5v3.5l-6.5 5.5z" fill="#9c9c9c"/><path d="M11.6 14h2.4v-2.4z" fill="#c8c8c8"/></svg>
<svg class="i" style="left:30.3px;top:164.5px;" width="16" height="16" viewBox="0 0 16 16"><defs><linearGradient id="tg"><stop offset="0" stop-color="#e6e6e6"/><stop offset="1" stop-color="#4a4a4a"/></linearGradient></defs><rect x="2" y="3.8" width="12" height="8.4" fill="url(#tg)" stroke="#d4d4d4" stroke-width="1"/><path d="M13.6 14h2.4v-2.4z" fill="#c8c8c8"/></svg>
<svg class="i" style="left:6.6px;top:183.5px;" width="16" height="16" viewBox="0 0 16 16"><path d="M5 2.5a3.6 3.6 0 0 1 6.4 1.2c0.6 2 -0.6 3.6 -2.6 4l-4 5.3l-2.6 -1.8l3.6 -5c-0.8 -1.2 -1.2 -2.3 -0.8 -3.7z" fill="#d4d4d4"/><circle cx="7.5" cy="5" r="1.5" fill="#777"/><path d="M11.6 14h2.4v-2.4z" fill="#c8c8c8"/></svg>
<svg class="i" style="left:30.3px;top:183.5px;" width="16" height="16" viewBox="0 0 16 16"><circle cx="6" cy="5.5" r="3.6" fill="#9c9c9c" stroke="#d4d4d4" stroke-width="1.3"/><path d="M8.6 8.2l4.6 4.8" stroke="#d4d4d4" stroke-width="2.2" stroke-linecap="round"/><path d="M13.6 14.5h2.4v-2.4z" fill="#c8c8c8"/></svg>
<svg class="i" style="left:6.6px;top:205px;" width="16" height="16" viewBox="0 0 16 16"><path d="M9.5 1.5l4.5 4.5l-1.5 1c0 3 -3.5 5.5 -8.5 6.5l-1.5 -1.5c1 -5 3.5 -8.5 6.5 -8.5z" fill="#d4d4d4"/><circle cx="8" cy="7.5" r="1.2" fill="#555"/><path d="M2.5 13l4.5 -4.5" stroke="#555" stroke-width="0.9"/><path d="M11.6 14h2.4v-2.4z" fill="#c8c8c8"/></svg>
<svg class="i" style="left:30.3px;top:205px;" width="16" height="16" viewBox="0 0 16 16"><path transform="translate(1 0.6) scale(0.9)" d="M2.5 2.5h11v3h-1c-0.2 -1.3 -0.8 -1.7 -2 -1.7h-1v8.2c0 0.9 0.4 1.2 1.7 1.2v0.8h-6.4v-0.8c1.3 0 1.7 -0.3 1.7 -1.2v-8.2h-1c-1.2 0 -1.8 0.4 -2 1.7h-1z" fill="#d4d4d4"/><path d="M13.1 14.5h2.4v-2.4z" fill="#c8c8c8"/></svg>
<svg class="i" style="left:6.6px;top:224px;" width="16" height="16" viewBox="0 0 16 16"><path d="M4 1.5l8 8h-3.6l2 4.2l-1.8 0.8l-2 -4.2l-2.6 2.4z" fill="#d4d4d4"/><path d="M11.6 14h2.4v-2.4z" fill="#c8c8c8"/></svg>
<svg class="i" style="left:30.3px;top:224px;" width="16" height="16" viewBox="0 0 16 16"><ellipse cx="8" cy="8" rx="6.2" ry="4.2" fill="#8e8e8e" stroke="#cfcfcf" stroke-width="1.3"/><path d="M13.1 14h2.4v-2.4z" fill="#c8c8c8"/></svg>
<svg class="i" style="left:6.6px;top:245.5px;" width="16" height="16" viewBox="0 0 16 16"><path d="M4.5 8v-4.2a0.9 0.9 0 0 1 1.8 0v3v-4.6a0.9 0.9 0 0 1 1.8 0v4.4v-4a0.9 0.9 0 0 1 1.8 0v4.4v-2.8a0.9 0.9 0 0 1 1.8 0v5.3c0 3 -1.5 4.5 -4 4.5c-2.2 0 -3 -0.8 -4 -2.6l-2 -3.6c-0.4 -0.9 0.7 -1.5 1.4 -0.8z" fill="#d4d4d4" stroke="#d4d4d4" stroke-width="0.5"/><path d="M11.6 14h2.4v-2.4z" fill="#c8c8c8"/></svg>
<svg class="i" style="left:30.3px;top:245.5px;" width="16" height="16" viewBox="0 0 16 16"><circle cx="6" cy="5.8" r="4" fill="#7d7d7d" stroke="#d4d4d4" stroke-width="1.4"/><path d="M9 9l4.5 4.5" stroke="#d4d4d4" stroke-width="2.4" stroke-linecap="round"/></svg>
<div style="left:20.7px;top:278.3px;width:18.3px;height:17.7px;background:#fff;border:1px solid #8a8a8a;"></div>
<div style="left:10.2px;top:266.2px;width:17.6px;height:17.4px;background:#000;border:1px solid #d0d0d0;box-shadow:0 0 0 1px #3a3a3a;"></div>
<svg class="i" style="left:31px;top:264px;" width="10" height="10" viewBox="0 0 10 10"><path d="M2.5 2.5h3.5a2 2 0 0 1 2 2v3" fill="none" stroke="#d0d0d0" stroke-width="1"/><path d="M3.3 0.8l-2.3 1.7l2.3 1.7zM6.3 6.7l1.7 2.3l1.7 -2.3z" fill="#d0d0d0"/></svg>
<svg class="i" style="left:7.5px;top:289px;" width="10" height="9" viewBox="0 0 10 9"><rect x="3.2" y="3.2" width="5.6" height="5" fill="#eee" stroke="#bbb" stroke-width="0.6"/><rect x="0.6" y="0.6" width="5.4" height="5" fill="#111" stroke="#ccc" stroke-width="0.8"/></svg>
<svg class="i" style="left:6.5px;top:306px;" width="14" height="11.5" viewBox="0 0 14 11.5"><rect x="0.7" y="0.7" width="12.6" height="10" fill="#4a4a4a" stroke="#d4d4d4" stroke-width="1.2"/><circle cx="7" cy="5.7" r="2.8" fill="#2a2a2a" stroke="#9a9a9a" stroke-width="0.8" stroke-dasharray="1 0.8"/></svg>
<svg class="i" style="left:30.5px;top:305px;" width="16" height="13" viewBox="0 0 16 13"><rect x="4" y="0.8" width="9.5" height="7" fill="#8c8c8c" stroke="#cfcfcf" stroke-width="1"/><rect x="0.8" y="3.8" width="9.5" height="7" fill="#7a7a7a" stroke="#cfcfcf" stroke-width="1"/><rect x="6" y="2.5" width="5.5" height="3.6" fill="#b8b8b8"/><path d="M13.6 12.5h2.4v-2.4z" fill="#c8c8c8"/></svg>
<div style="left:745px;top:46px;width:255px;height:8.5px;background:#343434;"></div>
<div style="left:745px;top:54px;width:255px;height:410px;background:#3a3a3a;"></div>
<svg class="i" style="left:764px;top:47.5px;" width="8" height="6" viewBox="0 0 8 6"><path d="M3.2 0.8L1 3l2.2 2.2zM6.8 0.8L4.6 3l2.2 2.2z" fill="#c8c8c8"/></svg>
<svg class="i" style="left:989.5px;top:47.5px;" width="8" height="6" viewBox="0 0 8 6"><path d="M1.2 0.8L3.4 3L1.2 5.2zM4.8 0.8L7 3L4.8 5.2z" fill="#c8c8c8"/></svg>
<div style="left:746px;top:54.5px;width:28px;height:410px;background:#4f4f4f;border-left:1px solid #5a5a5a;"></div>
<svg class="i" style="left:752px;top:57.5px;" width="15" height="3" viewBox="0 0 15 3"><path d="M0 0.5h14M0 2.5h14" stroke="#383838" stroke-width="1" stroke-dasharray="1 1"/></svg>
<svg class="i" style="left:754.4px;top:66.6px;overflow:visible;" width="12.2" height="11.8" viewBox="0 0 13 12.6"><rect x="0.5" y="0.5" width="5" height="2.3" fill="#d2d2d2"/><rect x="0.5" y="3.6" width="5" height="2.3" fill="#aaa"/><rect x="0.5" y="6.7" width="5" height="2.3" fill="#d2d2d2"/><rect x="1.6" y="10" width="2.8" height="2.3" fill="#d2d2d2"/><path d="M7.6 10.4c3 -1.4 3.8 -5 1.2 -7.6" fill="none" stroke="#d2d2d2" stroke-width="1.7"/><path d="M6.2 3.5l3.8 -2.8l0.6 4z" fill="#d2d2d2"/></svg>
<svg class="i" style="left:754px;top:87.8px;overflow:visible;" width="12.4" height="10" viewBox="0 0 12.4 10"><path d="M0.4 0.2l11.8 4.8l-11.8 4.8z" fill="#d2d2d2"/></svg>
<div style="left:747px;top:104.4px;width:27px;height:1px;background:#3c3c3c;box-shadow:0 1px 0 #5c5c5c;"></div>
<svg class="i" style="left:752px;top:107.5px;" width="15" height="3" viewBox="0 0 15 3"><path d="M0 0.5h14M0 2.5h14" stroke="#383838" stroke-width="1" stroke-dasharray="1 1"/></svg>
<svg class="i" style="left:753.5px;top:115.3px;overflow:visible;" width="11.7" height="13.4" viewBox="0 0 12 13.4"><path d="M3 7.6h6.5v5.4h-6.5z" fill="#d2d2d2"/><path d="M4.4 7.4l-2.2 -5.4M6.3 7.4v-6.6M8.2 7.4l2.2 -5" stroke="#d2d2d2" stroke-width="1.5"/><path d="M1.4 0.4l1.7 2.1l-1.5 0.8zM10.3 1.2l1.5 0.8l-1.7 2.1z" fill="#d2d2d2"/></svg>
<svg class="i" style="left:752.4px;top:137.4px;overflow:visible;" width="13.8" height="10.8" viewBox="0 0 13.8 10.8"><path d="M0.5 2.2h12.6" stroke="#d2d2d2" stroke-width="1.5"/><path d="M0.3 2.2l3.6 -1.5v3z" fill="#d2d2d2"/><path d="M0.5 8h8.6" stroke="#d2d2d2" stroke-width="1.7"/><circle cx="11" cy="8" r="2.5" fill="#d2d2d2"/></svg>
<div style="left:747px;top:155.2px;width:27px;height:1px;background:#3c3c3c;box-shadow:0 1px 0 #5c5c5c;"></div>
<svg class="i" style="left:752px;top:157.7px;" width="15" height="3" viewBox="0 0 15 3"><path d="M0 0.5h14M0 2.5h14" stroke="#383838" stroke-width="1" stroke-dasharray="1 1"/></svg>
<svg class="i" style="left:752px;top:166px;overflow:visible;" width="15" height="11.8" viewBox="0 0 15 11.8"><path d="M1 0.4h3.2v1.5h-3.2zM1 2.8h3.2v1.5h-3.2z" fill="#d2d2d2"/><path d="M7.4 1.6a1.6 1.6 0 0 1 3 0c0.3 1.3 -0.6 2 -0.6 3.3h2.9v2.6h-7.6v-2.6h2.9c0 -1.3 -0.9 -2 -0.6 -3.3z" fill="#d2d2d2"/><rect x="0.5" y="9.2" width="14" height="1.8" fill="#d2d2d2"/><rect x="1.6" y="5.2" width="2.4" height="2.8" fill="#d2d2d2"/></svg>
<div style="left:747px;top:185px;width:27px;height:1px;background:#3c3c3c;box-shadow:0 1px 0 #5c5c5c;"></div>
<svg class="i" style="left:752px;top:187.9px;" width="15" height="3" viewBox="0 0 15 3"><path d="M0 0.5h14M0 2.5h14" stroke="#383838" stroke-width="1" stroke-dasharray="1 1"/></svg>
<svg class="i" style="left:754px;top:196.4px;overflow:visible;" width="10" height="11.4" viewBox="0 0 10 11.4"><path d="M3.6 0.7h6M5.6 0.7v10.4M8.2 0.7v10.4" stroke="#d2d2d2" stroke-width="1.4" fill="none"/><path d="M5.8 0.2a3.2 3.2 0 0 0 0 6.4z" fill="#d2d2d2"/></svg>
<div style="left:747px;top:214.7px;width:27px;height:1px;background:#3c3c3c;box-shadow:0 1px 0 #5c5c5c;"></div>
<svg class="i" style="left:752px;top:217.5px;" width="15" height="3" viewBox="0 0 15 3"><path d="M0 0.5h14M0 2.5h14" stroke="#383838" stroke-width="1" stroke-dasharray="1 1"/></svg>
<svg class="i" style="left:753.6px;top:227px;overflow:visible;" width="10.8" height="11.6" viewBox="0 0 10.8 11.6"><rect x="0.7" y="0.7" width="9.4" height="10.2" fill="#6a6a6a" stroke="#d2d2d2" stroke-width="1.3"/><rect x="2.2" y="2.4" width="6.4" height="2" fill="#d2d2d2"/><rect x="2.2" y="5.6" width="6.4" height="3.6" fill="#a0a0a0"/></svg>
<svg class="i" style="left:753.8px;top:248px;overflow:visible;" width="11" height="12.6" viewBox="0 0 11 12.6"><rect x="0.7" y="0.7" width="9.6" height="11.2" fill="#6a6a6a" stroke="#d2d2d2" stroke-width="1.3"/><path d="M2.4 3.4h6.2M2.4 5.6h6.2M2.4 7.8h4.4" stroke="#d2d2d2" stroke-width="1.1"/><path d="M6.6 9.2h2.4v2h-2.4z" fill="#d2d2d2"/></svg>
<div style="left:747px;top:266.5px;width:27px;height:1px;background:#3c3c3c;box-shadow:0 1px 0 #5c5c5c;"></div>
<svg class="i" style="left:752px;top:268.9px;" width="15" height="3" viewBox="0 0 15 3"><path d="M0 0.5h14M0 2.5h14" stroke="#383838" stroke-width="1" stroke-dasharray="1 1"/></svg>
<svg class="i" style="left:754.4px;top:279px;overflow:visible;" width="10.8" height="9.8" viewBox="0 0 10.8 9.8"><path d="M0 9.6l3.3 -9.2h1.5l3.3 9.2h-1.6l-0.8 -2.4h-3.3l-0.8 2.4zM2.9 5.9h2.3l-1.15 -3.6z" fill="#d2d2d2"/><path d="M10 0v9.8" stroke="#d2d2d2" stroke-width="1.1"/></svg>
<div style="left:747px;top:295.5px;width:27px;height:1px;background:#3c3c3c;box-shadow:0 1px 0 #5c5c5c;"></div>
<svg class="i" style="left:752px;top:298.5px;" width="15" height="3" viewBox="0 0 15 3"><path d="M0 0.5h14M0 2.5h14" stroke="#383838" stroke-width="1" stroke-dasharray="1 1"/></svg>
<svg class="i" style="left:754.4px;top:306.4px;overflow:visible;" width="11.6" height="13" viewBox="0 0 11.6 13"><g transform="translate(4 4.2)"><circle r="2.1" fill="none" stroke="#d2d2d2" stroke-width="1.8"/><rect x="-0.8" y="-4" width="1.6" height="1.8" fill="#d2d2d2" transform="rotate(0)"/><rect x="-0.8" y="-4" width="1.6" height="1.8" fill="#d2d2d2" transform="rotate(60)"/><rect x="-0.8" y="-4" width="1.6" height="1.8" fill="#d2d2d2" transform="rotate(120)"/><rect x="-0.8" y="-4" width="1.6" height="1.8" fill="#d2d2d2" transform="rotate(180)"/><rect x="-0.8" y="-4" width="1.6" height="1.8" fill="#d2d2d2" transform="rotate(240)"/><rect x="-0.8" y="-4" width="1.6" height="1.8" fill="#d2d2d2" transform="rotate(300)"/></g><rect x="8.6" y="1" width="2.6" height="2.6" fill="#d2d2d2"/><rect x="8.6" y="4.8" width="2.6" height="2.6" fill="#d2d2d2"/><rect x="0.4" y="9.6" width="7.4" height="2.6" fill="#d2d2d2"/><rect x="8.6" y="9.6" width="2.6" height="2.6" fill="#d2d2d2"/></svg>
<div style="left:747px;top:326px;width:27px;height:1px;background:#3c3c3c;box-shadow:0 1px 0 #5c5c5c;"></div>
<div style="left:776px;top:55.3px;width:224px;height:13px;background:#3c3c3c;border-top:1px solid #4a4a4a;"></div>
<div style="left:776px;top:55.3px;width:32px;height:13px;background:#464646;border:1px solid #525252;border-bottom:none;"></div>
<div class="t" style="left:780.5px;top:56.8px;color:#aaaaaa;">直方图</div>
<div style="left:810.5px;top:55.3px;width:27px;height:13px;background:#535353;border:1px solid #666;border-bottom:none;"></div>
<div class="t" style="left:815px;top:56.8px;color:#e2e2e2;">信息</div>
<svg class="i" style="left:983.5px;top:59.3px;" width="10" height="6" viewBox="0 0 10 6"><path d="M0.5 1h3.4l-1.7 2.2z" fill="#d0d0d0"/><path d="M4.6 0.8h5M4.6 2.6h5M4.6 4.4h5" stroke="#d0d0d0" stroke-width="0.9"/></svg>
<div style="left:776px;top:68px;width:224px;height:2px;background:#353535;"></div>
<div style="left:776px;top:70px;width:224px;height:13px;background:#3c3c3c;border-top:1px solid #4a4a4a;"></div>
<div style="left:776px;top:70px;width:26.5px;height:13px;background:#535353;border:1px solid #666;border-bottom:none;"></div>
<div class="t" style="left:780.5px;top:71.5px;color:#e2e2e2;">调整</div>
<div style="left:804.5px;top:70px;width:26.5px;height:13px;background:#464646;border:1px solid #525252;border-bottom:none;"></div>
<div class="t" style="left:809px;top:71.5px;color:#8c8c8c;">样式</div>
<svg class="i" style="left:983.5px;top:74px;" width="10" height="6" viewBox="0 0 10 6"><path d="M0.5 1h3.4l-1.7 2.2z" fill="#d0d0d0"/><path d="M4.6 0.8h5M4.6 2.6h5M4.6 4.4h5" stroke="#d0d0d0" stroke-width="0.9"/></svg>
<div style="left:776px;top:83px;width:224px;height:2px;background:#353535;"></div>
<div style="left:776px;top:85.4px;width:224px;height:13px;background:#3c3c3c;border-top:1px solid #4a4a4a;"></div>
<div style="left:776px;top:85.4px;width:26.5px;height:13px;background:#535353;border:1px solid #666;border-bottom:none;"></div>
<div class="t" style="left:780.5px;top:86.9px;color:#e2e2e2;">图层</div>
<div style="left:804.5px;top:85.4px;width:26.5px;height:13px;background:#464646;border:1px solid #525252;border-bottom:none;"></div>
<div class="t" style="left:809px;top:86.9px;color:#8c8c8c;">通道</div>
<svg class="i" style="left:983.5px;top:89.4px;" width="10" height="6" viewBox="0 0 10 6"><path d="M0.5 1h3.4l-1.7 2.2z" fill="#d0d0d0"/><path d="M4.6 0.8h5M4.6 2.6h5M4.6 4.4h5" stroke="#d0d0d0" stroke-width="0.9"/></svg>
<div style="left:776px;top:98px;width:224px;height:366px;background:#535353;"></div>
<div style="left:776px;top:98px;width:1px;height:366px;background:#5e5e5e;"></div>
<div style="left:779px;top:101.5px;width:50.5px;height:13.5px;background:linear-gradient(#6a6a6a,#5e5e5e);border:1px solid #3e3e3e;border-radius:2.5px;"></div>
<svg class="i" style="left:782.5px;top:104px;" width="9" height="9" viewBox="0 0 9 9"><circle cx="4.6" cy="3.4" r="2.5" fill="none" stroke="#dcdcdc" stroke-width="1.2"/><path d="M3 5.4l-2.2 2.6" stroke="#dcdcdc" stroke-width="1.3"/></svg>
<div class="t" style="left:792.5px;top:103px;color:#dcdcdc;">类型</div>
<svg class="i" style="left:820px;top:102.5px;" width="8" height="12" viewBox="0 0 8 12"><path d="M2 5l2 -2.4l2 2.4zM2 7l2 2.4l2 -2.4z" fill="#d8d8d8"/></svg>
<svg class="i" style="left:845.8px;top:103.6px;overflow:visible;" width="9.8" height="8.7" viewBox="0 0 12 10.4"><rect x="0.8" y="0.8" width="10.4" height="8.8" fill="#777" stroke="#d4d4d4" stroke-width="1.3"/><path d="M2 8.4l2.7 -3.2l1.9 1.9l1.7 -1.5l2 2.8z" fill="#d4d4d4"/><circle cx="8.2" cy="3.5" r="1" fill="#d4d4d4"/></svg>
<svg class="i" style="left:863px;top:103.8px;overflow:visible;" width="8.4" height="8.4" viewBox="0 0 10.6 10.6"><circle cx="5.3" cy="5.3" r="4.3" fill="#333" stroke="#d4d4d4" stroke-width="1.5"/><path d="M5.3 1a4.3 4.3 0 0 0 -3.04 7.34z" fill="#d4d4d4"/></svg>
<svg class="i" style="left:880.2px;top:104px;overflow:visible;" width="9.4" height="8.4" viewBox="0 0 11 10.6"><path d="M0.8 1h9.4v2.8h-0.9c-0.2 -1.2 -0.6 -1.5 -1.6 -1.5h-1v6.3c0 0.7 0.3 1 1.3 1v0.9h-5v-0.9c1 0 1.3 -0.3 1.3 -1v-6.3h-1c-1 0 -1.4 0.3 -1.6 1.5h-0.9z" fill="#d4d4d4"/></svg>
<svg class="i" style="left:897.4px;top:103.9px;overflow:visible;" width="10.2" height="8.8" viewBox="0 0 11.6 10.6"><rect x="2" y="2" width="7.6" height="6.6" fill="none" stroke="#d4d4d4" stroke-width="1.1"/><g fill="#d4d4d4"><rect x="0.4" y="0.4" width="2.9" height="2.9"/><rect x="8.3" y="0.4" width="2.9" height="2.9"/><rect x="0.4" y="7.3" width="2.9" height="2.9"/><rect x="8.3" y="7.3" width="2.9" height="2.9"/></g></svg>
<svg class="i" style="left:916px;top:103.5px;overflow:visible;" width="9.4" height="10" viewBox="0 0 11.4 12.6"><path d="M0.8 3.6h8v8.2h-8z" fill="#8a8a8a" stroke="#d4d4d4" stroke-width="1.1"/><path d="M4.4 0.6h3.8l2.6 2.6v6h-2v-5.2h-4.4z" fill="#d4d4d4"/><rect x="2.3" y="7" width="3.6" height="3.2" fill="#d4d4d4"/></svg>
<div style="left:941.3px;top:102.5px;width:6.8px;height:11px;background:linear-gradient(#2e2e2e,#3c3c3c);border-radius:1.5px;border:1px solid #2c2c2c;"></div>
<div style="left:942.4px;top:103.5px;width:4.6px;height:3.2px;background:#6e6e6e;border-radius:1px;"></div>
<div style="left:776px;top:117.5px;width:212px;height:1px;background:#474747;box-shadow:0 1px 0 #5d5d5d;"></div>
<div style="left:779px;top:121.5px;width:79.5px;height:13.5px;background:linear-gradient(#6a6a6a,#5e5e5e);border:1px solid #3e3e3e;border-radius:2.5px;"></div>
<div class="t" style="left:784px;top:123.7px;color:#dcdcdc;">正常</div>
<svg class="i" style="left:849px;top:122.5px;" width="8" height="12" viewBox="0 0 8 12"><path d="M2 5l2 -2.4l2 2.4zM2 7l2 2.4l2 -2.4z" fill="#d8d8d8"/></svg>
<div class="t" style="left:866px;top:123.7px;color:#dcdcdc;">不透明度:</div>
<div style="left:907px;top:121.5px;width:25.5px;height:13.5px;background:#3b3b3b;border:1px solid #2f2f2f;"></div>
<div class="t" style="left:910px;top:123.5px;color:#e4e4e4;">100%</div>
<div style="left:933px;top:121.5px;width:14px;height:13.5px;background:linear-gradient(#747474,#646464);border:1px solid #3e3e3e;"></div>
<svg class="i" style="left:936px;top:126px;" width="8" height="6" viewBox="0 0 8 6"><path d="M1.5 1.5h5l-2.5 3z" fill="#e0e0e0"/></svg>
<div style="left:776px;top:138.5px;width:212px;height:1px;background:#4b4b4b;"></div>
<div class="t" style="left:780px;top:145px;color:#dcdcdc;">锁定:</div>
<svg class="i" style="left:806px;top:144px;" width="10" height="10" viewBox="0 0 10 10"><rect x="1" y="1" width="8" height="8" fill="#707070"/><rect x="1" y="1" width="2" height="2" fill="#a8a8a8"/><rect x="5" y="1" width="2" height="2" fill="#a8a8a8"/><rect x="3" y="3" width="2" height="2" fill="#a8a8a8"/><rect x="7" y="3" width="2" height="2" fill="#a8a8a8"/><rect x="1" y="5" width="2" height="2" fill="#a8a8a8"/><rect x="5" y="5" width="2" height="2" fill="#a8a8a8"/><rect x="3" y="7" width="2" height="2" fill="#a8a8a8"/><rect x="7" y="7" width="2" height="2" fill="#a8a8a8"/></svg>
<svg class="i" style="left:821px;top:143px;" width="12" height="12" viewBox="0 0 12 12"><path d="M11 1l-5.6 6l1.2 1.2z" fill="#a4a4a4"/><path d="M5 7.4l1.4 1.4c-0.8 1.7 -3 2 -5 1.7c1.3 -0.5 1.5 -2 3.6 -3.1z" fill="#a4a4a4"/></svg>
<svg class="i" style="left:838.8px;top:144.2px;" width="9.6" height="9.6" viewBox="0 0 12 12"><path d="M6 1.5v9M1.5 6h9" stroke="#d8d8d8" stroke-width="1.1"/><path d="M6 0l1.7 2.2h-3.4zM6 12l1.7 -2.2h-3.4zM0 6l2.2 -1.7v3.4zM12 6l-2.2 -1.7v3.4z" fill="#d8d8d8"/></svg>
<svg class="i" style="left:855px;top:143px;" width="10" height="12" viewBox="0 0 10 12"><rect x="1" y="5.2" width="8" height="6" rx="0.8" fill="#dedede"/><path d="M2.8 5.4v-1.6a2.2 2.2 0 0 1 4.4 0v1.6" fill="none" stroke="#dedede" stroke-width="1.3"/><rect x="4.4" y="7.2" width="1.2" height="2.2" fill="#444"/></svg>
<div class="t" style="left:882.5px;top:145px;color:#dcdcdc;">填充:</div>
<div style="left:907px;top:142px;width:25.5px;height:13.5px;background:#3b3b3b;border:1px solid #2f2f2f;"></div>
<div class="t" style="left:910px;top:143.5px;color:#e4e4e4;">100%</div>
<div style="left:933px;top:142px;width:14px;height:13.5px;background:linear-gradient(#747474,#646464);border:1px solid #3e3e3e;"></div>
<svg class="i" style="left:936px;top:146.5px;" width="8" height="6" viewBox="0 0 8 6"><path d="M1.5 1.5h5l-2.5 3z" fill="#e0e0e0"/></svg>
<div style="left:776px;top:159.5px;width:212.5px;height:1px;background:#3f3f3f;"></div>
<div style="left:988.5px;top:159.5px;width:7.5px;height:305px;background:#434343;"></div>
<div style="left:996px;top:98px;width:4px;height:366px;background:#4b4b4b;"></div>
<div style="left:797.5px;top:160px;width:1px;height:214px;background:#454545;"></div>
<div style="left:798.5px;top:160.5px;width:190px;height:28px;background:#69809c;"></div>
<svg class="i" style="left:781px;top:169px;" width="12" height="10" viewBox="0 0 12 10"><path d="M1.7 5c1.7 -3 6.9 -3 8.6 0c-1.7 3 -6.9 3 -8.6 0z" fill="#c9c9c9"/><circle cx="6" cy="5" r="1.45" fill="#3a3a3a"/></svg>
<div style="left:798.8px;top:161.2px;width:26.4px;height:27px;background:#f2f2f2;border:1px solid #30353c;"></div>
<svg class="i" style="left:800.5px;top:163px;" width="23" height="23.4" viewBox="0 0 23 23.4"><rect x="0" y="0" width="23" height="23.4" fill="#fff"/><rect x="0" y="0" width="2.9" height="2.9" fill="#cfcfcf"/><rect x="5.8" y="0" width="2.9" height="2.9" fill="#cfcfcf"/><rect x="11.6" y="0" width="2.9" height="2.9" fill="#cfcfcf"/><rect x="17.4" y="0" width="2.9" height="2.9" fill="#cfcfcf"/><rect x="2.9" y="2.9" width="2.9" height="2.9" fill="#cfcfcf"/><rect x="8.7" y="2.9" width="2.9" height="2.9" fill="#cfcfcf"/><rect x="14.5" y="2.9" width="2.9" height="2.9" fill="#cfcfcf"/><rect x="20.3" y="2.9" width="2.7" height="2.9" fill="#cfcfcf"/><rect x="0" y="5.8" width="2.9" height="2.9" fill="#cfcfcf"/><rect x="5.8" y="5.8" width="2.9" height="2.9" fill="#cfcfcf"/><rect x="11.6" y="5.8" width="2.9" height="2.9" fill="#cfcfcf"/><rect x="17.4" y="5.8" width="2.9" height="2.9" fill="#cfcfcf"/><rect x="2.9" y="8.7" width="2.9" height="2.9" fill="#cfcfcf"/><rect x="8.7" y="8.7" width="2.9" height="2.9" fill="#cfcfcf"/><rect x="14.5" y="8.7" width="2.9" height="2.9" fill="#cfcfcf"/><rect x="20.3" y="8.7" width="2.7" height="2.9" fill="#cfcfcf"/><rect x="0" y="11.6" width="2.9" height="2.9" fill="#cfcfcf"/><rect x="5.8" y="11.6" width="2.9" height="2.9" fill="#cfcfcf"/><rect x="11.6" y="11.6" width="2.9" height="2.9" fill="#cfcfcf"/><rect x="17.4" y="11.6" width="2.9" height="2.9" fill="#cfcfcf"/><rect x="2.9" y="14.5" width="2.9" height="2.9" fill="#cfcfcf"/><rect x="8.7" y="14.5" width="2.9" height="2.9" fill="#cfcfcf"/><rect x="14.5" y="14.5" width="2.9" height="2.9" fill="#cfcfcf"/><rect x="20.3" y="14.5" width="2.7" height="2.9" fill="#cfcfcf"/><rect x="0" y="17.4" width="2.9" height="2.9" fill="#cfcfcf"/><rect x="5.8" y="17.4" width="2.9" height="2.9" fill="#cfcfcf"/><rect x="11.6" y="17.4" width="2.9" height="2.9" fill="#cfcfcf"/><rect x="17.4" y="17.4" width="2.9" height="2.9" fill="#cfcfcf"/><rect x="2.9" y="20.3" width="2.9" height="2.9" fill="#cfcfcf"/><rect x="8.7" y="20.3" width="2.9" height="2.9" fill="#cfcfcf"/><rect x="14.5" y="20.3" width="2.9" height="2.9" fill="#cfcfcf"/><rect x="20.3" y="20.3" width="2.7" height="2.9" fill="#cfcfcf"/><rect x="0" y="23.2" width="2.9" height="0.2" fill="#cfcfcf"/><rect x="5.8" y="23.2" width="2.9" height="0.2" fill="#cfcfcf"/><rect x="11.6" y="23.2" width="2.9" height="0.2" fill="#cfcfcf"/><rect x="17.4" y="23.2" width="2.9" height="0.2" fill="#cfcfcf"/><circle cx="11.8" cy="12.6" r="6.6" fill="#050505"/><rect x="16" y="10" width="7" height="4.4" fill="#050505"/><rect x="15.6" y="16.2" width="6.6" height="6.4" fill="#e6e6e6" stroke="#2a2a2a" stroke-width="1"/><rect x="14.7" y="15.3" width="1.8" height="1.8" fill="#fff" stroke="#333" stroke-width="0.5"/><rect x="21.2" y="21.7" width="1.8" height="1.8" fill="#fff" stroke="#333" stroke-width="0.5"/><rect x="21.2" y="15.3" width="1.8" height="1.8" fill="#fff" stroke="#333" stroke-width="0.5"/><rect x="14.7" y="21.7" width="1.8" height="1.8" fill="#fff" stroke="#333" stroke-width="0.5"/></svg>
<div class="t" style="left:830.5px;top:170.6px;color:#f0f0f0;">椭圆 1</div>
<div style="left:776px;top:188.5px;width:212.5px;height:1px;background:#3f3f3f;"></div>
<svg class="i" style="left:781px;top:198px;" width="12" height="10" viewBox="0 0 12 10"><path d="M1.7 5c1.7 -3 6.9 -3 8.6 0c-1.7 3 -6.9 3 -8.6 0z" fill="#c9c9c9"/><circle cx="6" cy="5" r="1.45" fill="#3a3a3a"/></svg>
<svg class="i" style="left:800.5px;top:191.7px;" width="23" height="23.4" viewBox="0 0 23 23.4"><rect x="0" y="0" width="23" height="23.4" fill="#fff"/><rect x="0" y="0" width="2.9" height="2.9" fill="#cfcfcf"/><rect x="5.8" y="0" width="2.9" height="2.9" fill="#cfcfcf"/><rect x="11.6" y="0" width="2.9" height="2.9" fill="#cfcfcf"/><rect x="17.4" y="0" width="2.9" height="2.9" fill="#cfcfcf"/><rect x="2.9" y="2.9" width="2.9" height="2.9" fill="#cfcfcf"/><rect x="8.7" y="2.9" width="2.9" height="2.9" fill="#cfcfcf"/><rect x="14.5" y="2.9" width="2.9" height="2.9" fill="#cfcfcf"/><rect x="20.3" y="2.9" width="2.7" height="2.9" fill="#cfcfcf"/><rect x="0" y="5.8" width="2.9" height="2.9" fill="#cfcfcf"/><rect x="5.8" y="5.8" width="2.9" height="2.9" fill="#cfcfcf"/><rect x="11.6" y="5.8" width="2.9" height="2.9" fill="#cfcfcf"/><rect x="17.4" y="5.8" width="2.9" height="2.9" fill="#cfcfcf"/><rect x="2.9" y="8.7" width="2.9" height="2.9" fill="#cfcfcf"/><rect x="8.7" y="8.7" width="2.9" height="2.9" fill="#cfcfcf"/><rect x="14.5" y="8.7" width="2.9" height="2.9" fill="#cfcfcf"/><rect x="20.3" y="8.7" width="2.7" height="2.9" fill="#cfcfcf"/><rect x="0" y="11.6" width="2.9" height="2.9" fill="#cfcfcf"/><rect x="5.8" y="11.6" width="2.9" height="2.9" fill="#cfcfcf"/><rect x="11.6" y="11.6" width="2.9" height="2.9" fill="#cfcfcf"/><rect x="17.4" y="11.6" width="2.9" height="2.9" fill="#cfcfcf"/><rect x="2.9" y="14.5" width="2.9" height="2.9" fill="#cfcfcf"/><rect x="8.7" y="14.5" width="2.9" height="2.9" fill="#cfcfcf"/><rect x="14.5" y="14.5" width="2.9" height="2.9" fill="#cfcfcf"/><rect x="20.3" y="14.5" width="2.7" height="2.9" fill="#cfcfcf"/><rect x="0" y="17.4" width="2.9" height="2.9" fill="#cfcfcf"/><rect x="5.8" y="17.4" width="2.9" height="2.9" fill="#cfcfcf"/><rect x="11.6" y="17.4" width="2.9" height="2.9" fill="#cfcfcf"/><rect x="17.4" y="17.4" width="2.9" height="2.9" fill="#cfcfcf"/><rect x="2.9" y="20.3" width="2.9" height="2.9" fill="#cfcfcf"/><rect x="8.7" y="20.3" width="2.9" height="2.9" fill="#cfcfcf"/><rect x="14.5" y="20.3" width="2.9" height="2.9" fill="#cfcfcf"/><rect x="20.3" y="20.3" width="2.7" height="2.9" fill="#cfcfcf"/><rect x="0" y="23.2" width="2.9" height="0.2" fill="#cfcfcf"/><rect x="5.8" y="23.2" width="2.9" height="0.2" fill="#cfcfcf"/><rect x="11.6" y="23.2" width="2.9" height="0.2" fill="#cfcfcf"/><rect x="17.4" y="23.2" width="2.9" height="0.2" fill="#cfcfcf"/><rect x="5.2" y="5.8" width="13" height="14" rx="4.6" fill="#050505"/><rect x="16" y="10" width="7" height="4.4" fill="#050505"/><rect x="15.6" y="16.2" width="6.6" height="6.4" fill="#e6e6e6" stroke="#2a2a2a" stroke-width="1"/><rect x="14.7" y="15.3" width="1.8" height="1.8" fill="#fff" stroke="#333" stroke-width="0.5"/><rect x="21.2" y="21.7" width="1.8" height="1.8" fill="#fff" stroke="#333" stroke-width="0.5"/><rect x="21.2" y="15.3" width="1.8" height="1.8" fill="#fff" stroke="#333" stroke-width="0.5"/><rect x="14.7" y="21.7" width="1.8" height="1.8" fill="#fff" stroke="#333" stroke-width="0.5"/></svg>
<div class="t" style="left:830.5px;top:200.2px;color:#dcdcdc;">圆角矩形 1 拷贝</div>
<div class="t" style="left:968.5px;top:198.5px;font-family:'Liberation Serif',serif;font-style:italic;font-weight:bold;font-size:10.5px;color:#e4e4e4;letter-spacing:-0.5px">fx</div>
<div style="left:980.5px;top:189px;width:8px;height:30px;background:linear-gradient(#b2b2b2,#8a8a8a 40%,#585858);"></div>
<svg class="i" style="left:981.5px;top:201.5px;" width="6" height="5" viewBox="0 0 6 5"><path d="M0.8 3.6h4.4l-2.2 -2.8z" fill="#2e2e2e"/></svg>
<svg class="i" style="left:810.5px;top:220.5px;" width="11" height="9" viewBox="0 0 11 9"><path d="M1.2 4.5c1.7 -3 6.9 -3 8.6 0c-1.7 3 -6.9 3 -8.6 0z" fill="#c9c9c9"/><circle cx="5.5" cy="4.5" r="1.45" fill="#3a3a3a"/></svg>
<div class="t" style="left:826.5px;top:220.6px;color:#dcdcdc;">效果</div>
<svg class="i" style="left:822.5px;top:234.5px;" width="11" height="9" viewBox="0 0 11 9"><path d="M1.2 4.5c1.7 -3 6.9 -3 8.6 0c-1.7 3 -6.9 3 -8.6 0z" fill="#c9c9c9"/><circle cx="5.5" cy="4.5" r="1.45" fill="#3a3a3a"/></svg>
<div class="t" style="left:838.5px;top:234.6px;color:#dcdcdc;">渐变叠加</div>
<div style="left:776px;top:244.5px;width:212.5px;height:1px;background:#3f3f3f;"></div>
<svg class="i" style="left:781px;top:255.5px;" width="12" height="10" viewBox="0 0 12 10"><path d="M1.7 5c1.7 -3 6.9 -3 8.6 0c-1.7 3 -6.9 3 -8.6 0z" fill="#c9c9c9"/><circle cx="6" cy="5" r="1.45" fill="#3a3a3a"/></svg>
<svg class="i" style="left:800.5px;top:248.7px;" width="23" height="23.4" viewBox="0 0 23 23.4"><rect x="0" y="0" width="23" height="23.4" fill="#fff"/><rect x="0" y="0" width="2.9" height="2.9" fill="#cfcfcf"/><rect x="5.8" y="0" width="2.9" height="2.9" fill="#cfcfcf"/><rect x="11.6" y="0" width="2.9" height="2.9" fill="#cfcfcf"/><rect x="17.4" y="0" width="2.9" height="2.9" fill="#cfcfcf"/><rect x="2.9" y="2.9" width="2.9" height="2.9" fill="#cfcfcf"/><rect x="8.7" y="2.9" width="2.9" height="2.9" fill="#cfcfcf"/><rect x="14.5" y="2.9" width="2.9" height="2.9" fill="#cfcfcf"/><rect x="20.3" y="2.9" width="2.7" height="2.9" fill="#cfcfcf"/><rect x="0" y="5.8" width="2.9" height="2.9" fill="#cfcfcf"/><rect x="5.8" y="5.8" width="2.9" height="2.9" fill="#cfcfcf"/><rect x="11.6" y="5.8" width="2.9" height="2.9" fill="#cfcfcf"/><rect x="17.4" y="5.8" width="2.9" height="2.9" fill="#cfcfcf"/><rect x="2.9" y="8.7" width="2.9" height="2.9" fill="#cfcfcf"/><rect x="8.7" y="8.7" width="2.9" height="2.9" fill="#cfcfcf"/><rect x="14.5" y="8.7" width="2.9" height="2.9" fill="#cfcfcf"/><rect x="20.3" y="8.7" width="2.7" height="2.9" fill="#cfcfcf"/><rect x="0" y="11.6" width="2.9" height="2.9" fill="#cfcfcf"/><rect x="5.8" y="11.6" width="2.9" height="2.9" fill="#cfcfcf"/><rect x="11.6" y="11.6" width="2.9" height="2.9" fill="#cfcfcf"/><rect x="17.4" y="11.6" width="2.9" height="2.9" fill="#cfcfcf"/><rect x="2.9" y="14.5" width="2.9" height="2.9" fill="#cfcfcf"/><rect x="8.7" y="14.5" width="2.9" height="2.9" fill="#cfcfcf"/><rect x="14.5" y="14.5" width="2.9" height="2.9" fill="#cfcfcf"/><rect x="20.3" y="14.5" width="2.7" height="2.9" fill="#cfcfcf"/><rect x="0" y="17.4" width="2.9" height="2.9" fill="#cfcfcf"/><rect x="5.8" y="17.4" width="2.9" height="2.9" fill="#cfcfcf"/><rect x="11.6" y="17.4" width="2.9" height="2.9" fill="#cfcfcf"/><rect x="17.4" y="17.4" width="2.9" height="2.9" fill="#cfcfcf"/><rect x="2.9" y="20.3" width="2.9" height="2.9" fill="#cfcfcf"/><rect x="8.7" y="20.3" width="2.9" height="2.9" fill="#cfcfcf"/><rect x="14.5" y="20.3" width="2.9" height="2.9" fill="#cfcfcf"/><rect x="20.3" y="20.3" width="2.7" height="2.9" fill="#cfcfcf"/><rect x="0" y="23.2" width="2.9" height="0.2" fill="#cfcfcf"/><rect x="5.8" y="23.2" width="2.9" height="0.2" fill="#cfcfcf"/><rect x="11.6" y="23.2" width="2.9" height="0.2" fill="#cfcfcf"/><rect x="17.4" y="23.2" width="2.9" height="0.2" fill="#cfcfcf"/><rect x="5.2" y="5.8" width="13" height="14" rx="4.6" fill="#050505"/><rect x="16" y="10" width="7" height="4.4" fill="#050505"/><rect x="15.6" y="16.2" width="6.6" height="6.4" fill="#e6e6e6" stroke="#2a2a2a" stroke-width="1"/><rect x="14.7" y="15.3" width="1.8" height="1.8" fill="#fff" stroke="#333" stroke-width="0.5"/><rect x="21.2" y="21.7" width="1.8" height="1.8" fill="#fff" stroke="#333" stroke-width="0.5"/><rect x="21.2" y="15.3" width="1.8" height="1.8" fill="#fff" stroke="#333" stroke-width="0.5"/><rect x="14.7" y="21.7" width="1.8" height="1.8" fill="#fff" stroke="#333" stroke-width="0.5"/></svg>
<div class="t" style="left:830.5px;top:256.8px;color:#dcdcdc;">圆角矩形 1</div>
<div class="t" style="left:968.5px;top:255.5px;font-family:'Liberation Serif',serif;font-style:italic;font-weight:bold;font-size:10.5px;color:#e4e4e4;letter-spacing:-0.5px">fx</div>
<div style="left:980.5px;top:246px;width:8px;height:30px;background:linear-gradient(#b2b2b2,#8a8a8a 40%,#585858);"></div>
<svg class="i" style="left:981.5px;top:258.5px;" width="6" height="5" viewBox="0 0 6 5"><path d="M0.8 3.6h4.4l-2.2 -2.8z" fill="#2e2e2e"/></svg>
<svg class="i" style="left:810.5px;top:277px;" width="11" height="9" viewBox="0 0 11 9"><path d="M1.2 4.5c1.7 -3 6.9 -3 8.6 0c-1.7 3 -6.9 3 -8.6 0z" fill="#c9c9c9"/><circle cx="5.5" cy="4.5" r="1.45" fill="#3a3a3a"/></svg>
<div class="t" style="left:826.5px;top:277.1px;color:#dcdcdc;">效果</div>
<svg class="i" style="left:822.5px;top:291px;" width="11" height="9" viewBox="0 0 11 9"><path d="M1.2 4.5c1.7 -3 6.9 -3 8.6 0c-1.7 3 -6.9 3 -8.6 0z" fill="#c9c9c9"/><circle cx="5.5" cy="4.5" r="1.45" fill="#3a3a3a"/></svg>
<div class="t" style="left:838.5px;top:291.1px;color:#dcdcdc;">斜面和浮雕</div>
<svg class="i" style="left:822.5px;top:305px;" width="11" height="9" viewBox="0 0 11 9"><path d="M1.2 4.5c1.7 -3 6.9 -3 8.6 0c-1.7 3 -6.9 3 -8.6 0z" fill="#c9c9c9"/><circle cx="5.5" cy="4.5" r="1.45" fill="#3a3a3a"/></svg>
<div class="t" style="left:838.5px;top:305.1px;color:#dcdcdc;">内阴影</div>
<svg class="i" style="left:822.5px;top:318.7px;" width="11" height="9" viewBox="0 0 11 9"><path d="M1.2 4.5c1.7 -3 6.9 -3 8.6 0c-1.7 3 -6.9 3 -8.6 0z" fill="#c9c9c9"/><circle cx="5.5" cy="4.5" r="1.45" fill="#3a3a3a"/></svg>
<div class="t" style="left:838.5px;top:318.8px;color:#dcdcdc;">渐变叠加</div>
<svg class="i" style="left:822.5px;top:332.7px;" width="11" height="9" viewBox="0 0 11 9"><path d="M1.2 4.5c1.7 -3 6.9 -3 8.6 0c-1.7 3 -6.9 3 -8.6 0z" fill="#c9c9c9"/><circle cx="5.5" cy="4.5" r="1.45" fill="#3a3a3a"/></svg>
<div class="t" style="left:838.5px;top:332.8px;color:#dcdcdc;">投影</div>
<div style="left:776px;top:343px;width:212.5px;height:1px;background:#3f3f3f;"></div>
<svg class="i" style="left:781px;top:353.5px;" width="12" height="10" viewBox="0 0 12 10"><path d="M1.7 5c1.7 -3 6.9 -3 8.6 0c-1.7 3 -6.9 3 -8.6 0z" fill="#c9c9c9"/><circle cx="6" cy="5" r="1.45" fill="#3a3a3a"/></svg>
<div style="left:800.3px;top:346.5px;width:23.2px;height:22.4px;background:#fff;border:1px solid #c4c4c4;"></div>
<div class="t" style="left:832px;top:354.4px;color:#dcdcdc;transform:skewX(-14deg)">背景</div>
<svg class="i" style="left:967.5px;top:352.5px;" width="10" height="12" viewBox="0 0 10 12"><rect x="1" y="5.2" width="8" height="6" rx="0.8" fill="none" stroke="#d4d4d4" stroke-width="1.1"/><path d="M2.8 5.2v-1.4a2.2 2.2 0 0 1 4.4 0v1.4" fill="none" stroke="#d4d4d4" stroke-width="1.2"/><rect x="4.4" y="7.2" width="1.2" height="2.2" fill="#d4d4d4"/></svg>
<div style="left:776px;top:373.5px;width:212.5px;height:1px;background:#3f3f3f;"></div>
<div style="left:777px;top:374.5px;width:211.5px;height:90px;background:#464646;"></div>
<div style="left:729.5px;top:441.5px;width:8px;height:23px;background:#282828;"></div>
<div style="left:737.5px;top:441.5px;width:11.5px;height:23px;background:#3c3c3c;"></div>
<div style="left:749.5px;top:441.5px;width:28.5px;height:23px;background:#4e4e4e;border-left:1px solid #5a5a5a;"></div>
</div>
</body></html>
